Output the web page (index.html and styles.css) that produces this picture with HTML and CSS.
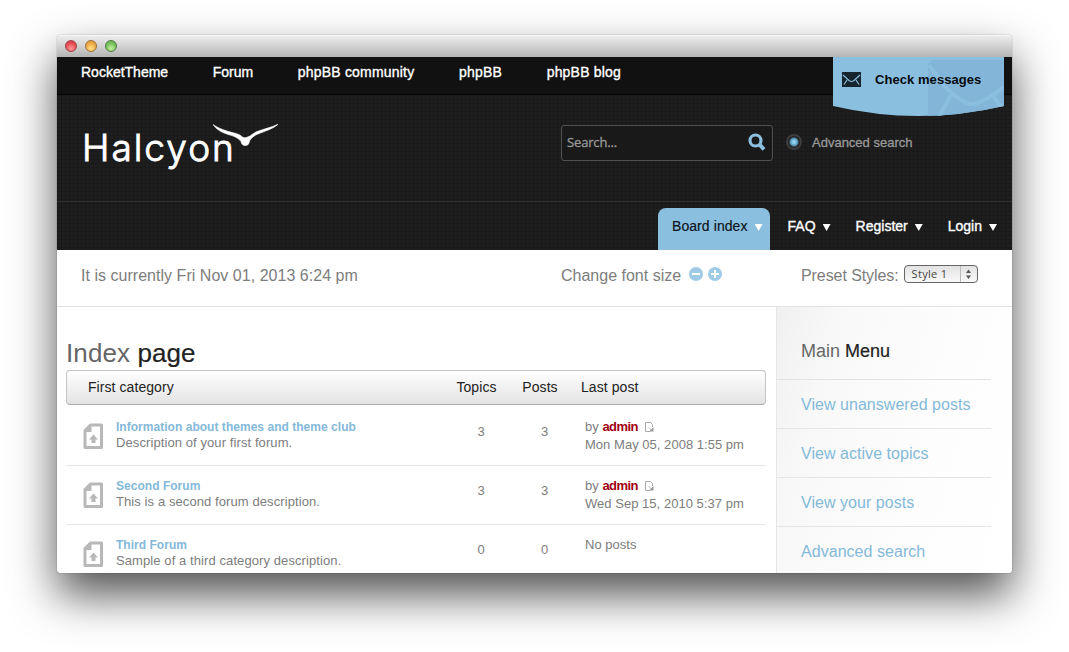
FILE: index.html
```html
<!DOCTYPE html>
<html lang="en">
<head>
<meta charset="utf-8">
<title>Halcyon - Index page</title>
<link rel="stylesheet" href="styles.css">
</head>
<body>
<svg width="0" height="0" class="defs">
  <symbol id="doc" viewBox="0 0 21 27">
    <path d="M7.500 2H18.500V24.500H2V7.500Z" fill="#fff" stroke="#b8b8b8" stroke-width="3" stroke-linejoin="round"/>
    <path d="M2 9V7.500L7.500 2H8.500V9Z" fill="#b8b8b8"/>
    <path d="M10.500 11.500L15 16.500H12.500V20H8.500V16.500H6Z" fill="#b8b8b8"/>
  </symbol>
  <symbol id="latest" viewBox="0 0 9 10">
    <path d="M5 9.500H.5V.5H5.500L7.500 2.500V5" fill="none" stroke="#aaa"/>
    <path d="M3.500 5L6.500 8" stroke="#bbb"/>
    <path d="M8.500 5V9.500H4Z" fill="#999"/>
  </symbol>
</svg>
<div class="window">
  <div class="titlebar"><i class="light red"></i><i class="light amber"></i><i class="light green"></i></div>
  <nav class="topnav"><a>RocketTheme</a><a>Forum</a><a class="wide">phpBB community</a><a class="wide">phpBB</a><a class="wide">phpBB blog</a></nav>
  <div class="messages">
    <svg class="ribbon" width="171" height="60" viewBox="0 0 171 60">
      <defs><clipPath id="rib"><path d="M0 0H171V49Q128 59 85.500 59Q43 59 0 49Z"/></clipPath></defs>
      <g clip-path="url(#rib)">
        <rect width="171" height="60" fill="#8bbfe0"/>
        <path d="M95 7L99 3H171V60H95Z" fill="#82b5d8"/>
        <path d="M96 8L113 31Q130 47 139 47Q148 47 171 30M106 60L119 36M160 39L174 58" fill="none" stroke="#8bbfe0" stroke-width="4"/>
      </g>
    </svg>
    <div class="messages-label">
      <svg width="19" height="15" viewBox="0 0 19 15"><rect width="19" height="15" fill="#17252f"/><path d="M1 3L7 8.500Q9.500 10.500 12 8.500L18 3M2 12.500L5 8M17 12.500L14 8" fill="none" stroke="#8bbfe0" stroke-width="1.200"/></svg>
      <span>Check messages</span>
    </div>
  </div>
  <header class="header">
    <div class="brand-row">
      <div class="logo"><span>Halcyon</span>
        <svg class="bird" width="66" height="23" viewBox="0 0 66 23"><path d="M0 0.500C8 6 16 7.500 23 9.500C26 10.400 28 11.500 29.500 13C31 14 33 14 34.500 13C38 12 38 10.500 44 7.500C51 5 58 3.500 65 .3C60 5 51 7.500 45 10C40 12 38 14.500 36.500 17C36 21 34 21.500 32 21.500C29.500 21.500 28.500 20 28 17.500C26 15 23 13 19 11.600C11 9.500 4 6.500 0 .5Z" fill="#fff" stroke="#fff" stroke-width=".6"/></svg>
      </div>
      <div class="search"><span>Search...</span>
        <svg width="18" height="18" viewBox="0 0 18 18"><circle cx="7.500" cy="7.500" r="5.500" fill="none" stroke="#8bbfe0" stroke-width="3.200"/><path d="M11.500 11.500L16 16.500" stroke="#8bbfe0" stroke-width="4"/></svg>
      </div>
      <i class="radio"></i>
      <a class="advanced">Advanced search</a>
    </div>
    <nav class="menu">
      <a class="active"><span>Board index</span><i class="arrow"></i></a>
      <a><span>FAQ</span><i class="arrow"></i></a>
      <a><span>Register</span><i class="arrow"></i></a>
      <a><span>Login</span><i class="arrow"></i></a>
    </nav>
  </header>
  <div class="status">
    <span class="now">It is currently Fri Nov 01, 2013 6:24 pm</span>
    <div class="fontsize"><span>Change font size</span>
      <svg width="34" height="14" viewBox="0 0 34 14"><circle cx="7" cy="7" r="7" fill="#a0cbe6"/><circle cx="26" cy="7" r="7" fill="#a0cbe6"/><path d="M3 7H11M22 7H30M26 3V11" stroke="#fff" stroke-width="2"/></svg>
    </div>
    <div class="preset"><span>Preset Styles:</span>
      <div class="select"><span>Style 1</span><svg width="17" height="16" viewBox="0 0 17 16"><path d="M.5 0V16" stroke="#bbb"/><path d="M6 7L8.500 3.500L11 7ZM6 9.500L8.500 13L11 9.500Z" fill="#555"/></svg></div>
    </div>
  </div>
  <div class="content">
    <main>
      <h1>Index <b>page</b></h1>
      <div class="cols thead"><span>First category</span><span>Topics</span><span>Posts</span><span>Last post</span></div>
      <div class="cols row">
        <div class="forum"><svg width="21" height="27"><use href="#doc"/></svg><div><a>Information about themes and theme club</a><p>Description of your first forum.</p></div></div>
        <span class="num">3</span><span class="num">3</span>
        <div class="last"><p>by <b>admin</b><svg width="9" height="10"><use href="#latest"/></svg></p><p>Mon May 05, 2008 1:55 pm</p></div>
      </div>
      <div class="cols row">
        <div class="forum"><svg width="21" height="27"><use href="#doc"/></svg><div><a>Second Forum</a><p>This is a second forum description.</p></div></div>
        <span class="num">3</span><span class="num">3</span>
        <div class="last"><p>by <b>admin</b><svg width="9" height="10"><use href="#latest"/></svg></p><p>Wed Sep 15, 2010 5:37 pm</p></div>
      </div>
      <div class="cols row">
        <div class="forum"><svg width="21" height="27"><use href="#doc"/></svg><div><a>Third Forum</a><p>Sample of a third category description.</p></div></div>
        <span class="num">0</span><span class="num">0</span>
        <div class="last"><p>No posts</p></div>
      </div>
    </main>
    <aside>
      <h2>Main <b>Menu</b></h2>
      <a>View unanswered posts</a><a>View active topics</a><a>View your posts</a><a>Advanced search</a>
    </aside>
  </div>
</div>
</body>
</html>
```

FILE: styles.css
```css
* { box-sizing: border-box; }
body { margin: 0; height: 652px; overflow: hidden; background: #fff; padding: 35px 57px 0; font-family: "Liberation Sans", Arial, sans-serif; color: #7d7d7d; }
p, h1, h2 { margin: 0; font-weight: normal; }
.defs { position: absolute; }
.window { position: relative; width: 955px; height: 538px; border-radius: 4px; overflow: hidden; background: #fff; }
body::before { content: ""; position: absolute; left: 57px; top: 35px; width: 955px; height: 538px; border-radius: 4px; box-shadow: 0 0 1px rgba(0,0,0,.7), 0 22px 45px rgba(0,0,0,.68); }
.titlebar { display: flex; align-items: center; gap: 7px; height: 22px; padding: 0 0 1px 8px; background: linear-gradient(#ececec, #b4b4b4); border-top: 1px solid #f5f5f5; }
.light { width: 12px; height: 12px; margin-right: 1px; border-radius: 50%; border: 1px solid; }
.red { background: radial-gradient(circle at 50% 75%, #ff9b98, #e2444c 65%); border-color: #9c4247; }
.amber { background: radial-gradient(circle at 50% 75%, #ffe385, #e9a33f 65%); border-color: #99703a; }
.green { background: radial-gradient(circle at 50% 75%, #c3f29b, #6fba58 65%); border-color: #4d793f; }
.topnav { display: flex; gap: 44.600px; height: 38px; padding: 7px 0 0 24px; background: #111; border-bottom: 1px solid #050505; color: #fff; font-size: 14px; line-height: 17px; -webkit-text-stroke: .35px #fff; }
.topnav .wide { letter-spacing: .2px; }
.messages { position: absolute; left: 776px; top: 22px; width: 171px; height: 60px; }
.ribbon { position: absolute; left: 0; top: 0; }
.messages-label { position: relative; display: flex; align-items: center; gap: 14px; padding: 14px 0 0 9px; height: 30px; color: #050a0e; font-size: 13px; font-weight: bold; white-space: nowrap; letter-spacing: .06px; }
.header { height: 155px; background-color: #1e1e1e; background-image: repeating-linear-gradient(90deg, rgba(0,0,0,.15) 0 1px, transparent 1px 4px), repeating-linear-gradient(rgba(0,0,0,.15) 0 1px, transparent 1px 4px); }
.brand-row { display: flex; align-items: flex-start; height: 107px; padding: 30px 0 0 24px; border-bottom: 1px solid #2f2f2f; }
.logo { position: relative; width: 480px; height: 60px; color: #fff; font: 300 37px/46px Inter, sans-serif; letter-spacing: 2px; }
.logo span { margin-left: 1px; -webkit-text-stroke: .9px #fff; }
.bird { position: absolute; left: 132px; top: -1px; }
.search { display: flex; align-items: center; justify-content: space-between; width: 212px; height: 36px; padding: 0 6px 2px 5px; border: 1px solid #515151; border-radius: 3px; background: #191919; color: #999; font: 13px "Open Sans", sans-serif; }
.search span { letter-spacing: -.15px; -webkit-text-stroke: .3px #999; }
.radio { width: 16px; height: 16px; margin: 9px 10px 0 13px; border-radius: 50%; border: 2px solid #3c3c3c; background: radial-gradient(circle, #8bcdf0 0 1.500px, #4d87a8 4px, #222 5px); }
.advanced { margin-top: 9px; font-size: 13px; line-height: 17px; color: #999; -webkit-text-stroke: .3px #999; }
.menu { display: flex; justify-content: flex-end; height: 48px; padding: 6px 8px 0 0; color: #fff; font-size: 14px; -webkit-text-stroke: .35px; }
.menu a { display: flex; gap: 7px; height: 42px; padding: 10px 7px 0 14px; margin-left: 4px; line-height: 17px; }
.menu .active { letter-spacing: .08px; background: #8bbfe0; border-radius: 8px 8px 0 0; color: #0b1218; -webkit-text-stroke: .15px; }
.arrow { margin-top: 6px; width: 8px; height: 7px; background: #fff; clip-path: polygon(0 0, 100% 0, 50% 100%); }
.status { display: flex; height: 57px; padding: 14px 0 0 24px; border-bottom: 1px solid #e3e3e3; font-size: 16px; line-height: 22px; }
.status > * { white-space: nowrap; }
.status > span, .status > div > span { padding-top: 1px; }
.now { width: 480px; letter-spacing: .03px; }
.fontsize { display: flex; gap: 8px; width: 240px; }
.fontsize svg { margin-top: 3px; }
.preset { display: flex; gap: 5px; }
.preset > span { letter-spacing: -.08px; }
.select { display: flex; justify-content: space-between; width: 74px; height: 18px; margin-top: 1px; padding-left: 7px; border: 1px solid #666; border-radius: 4px; background: linear-gradient(#e2e2e2, #fafafa); color: #444; font: 11px/16px "Open Sans", sans-serif; letter-spacing: .3px; }
.content { display: flex; height: 266px; }
main { width: 719px; padding: 31px 10px 0 9px; }
h1 { height: 32px; font-size: 26px; line-height: 30px; letter-spacing: .1px; color: #666; }
h1 b, h2 b { font-weight: normal; color: #222; -webkit-text-stroke: .2px #222; }
.cols { display: grid; grid-template-columns: 379px 63px 64px 1fr; }
.thead { height: 35px; border: 1px solid #c4c4c4; border-bottom-color: #aaa; border-radius: 4px; background: linear-gradient(#fff, #e3e3e3); color: #222; font-size: 14px; line-height: 32px; letter-spacing: .07px; }
.thead span:first-child { padding-left: 21px; }
.thead span:nth-child(2), .thead span:nth-child(3) { text-align: center; padding-right: 2px; }
.thead span:nth-child(4) { padding-left: 8px; }
.row { height: 60px; margin-bottom: -1px; border-bottom: 1px solid #e6e6e6; padding-top: 14px; font-size: 13px; line-height: 16px; white-space: nowrap; }
.thead + .row { height: 61px; }
.row + .row { padding-top: 13px; }
.forum { display: flex; gap: 12px; padding-left: 17px; }
.forum svg { margin-top: 4px; }
.forum a { display: block; color: #84b9d9; font-weight: bold; font-size: 12px; letter-spacing: .03px; }
.forum p { letter-spacing: .09px; }
.num { padding-top: 5px; text-align: center; padding-left: 9px; }
.last { padding-left: 13px; line-height: 18px; margin-top: -1px; letter-spacing: .03px; }
.last b { color: #a00010; letter-spacing: -.55px; }
.last svg { margin: 0 0 -1px 7px; }
aside { width: 236px; border-left: 1px solid #e6e6e6; background: linear-gradient(105deg, #f0f0f0, #f8f8f8 20%, #fdfdfd 60%, #fff); }
h2 { width: 214px; height: 73px; padding: 33px 0 0 24px; border-bottom: 1px solid #e1e4e5; font-size: 18px; line-height: 22px; color: #666; }
aside a { display: block; width: 214px; height: 49px; padding: 14px 0 0 24px; border-bottom: 1px solid #e3e6e7; font-size: 16px; line-height: 22px; letter-spacing: .04px; color: #84b9d9; white-space: nowrap; }
```
